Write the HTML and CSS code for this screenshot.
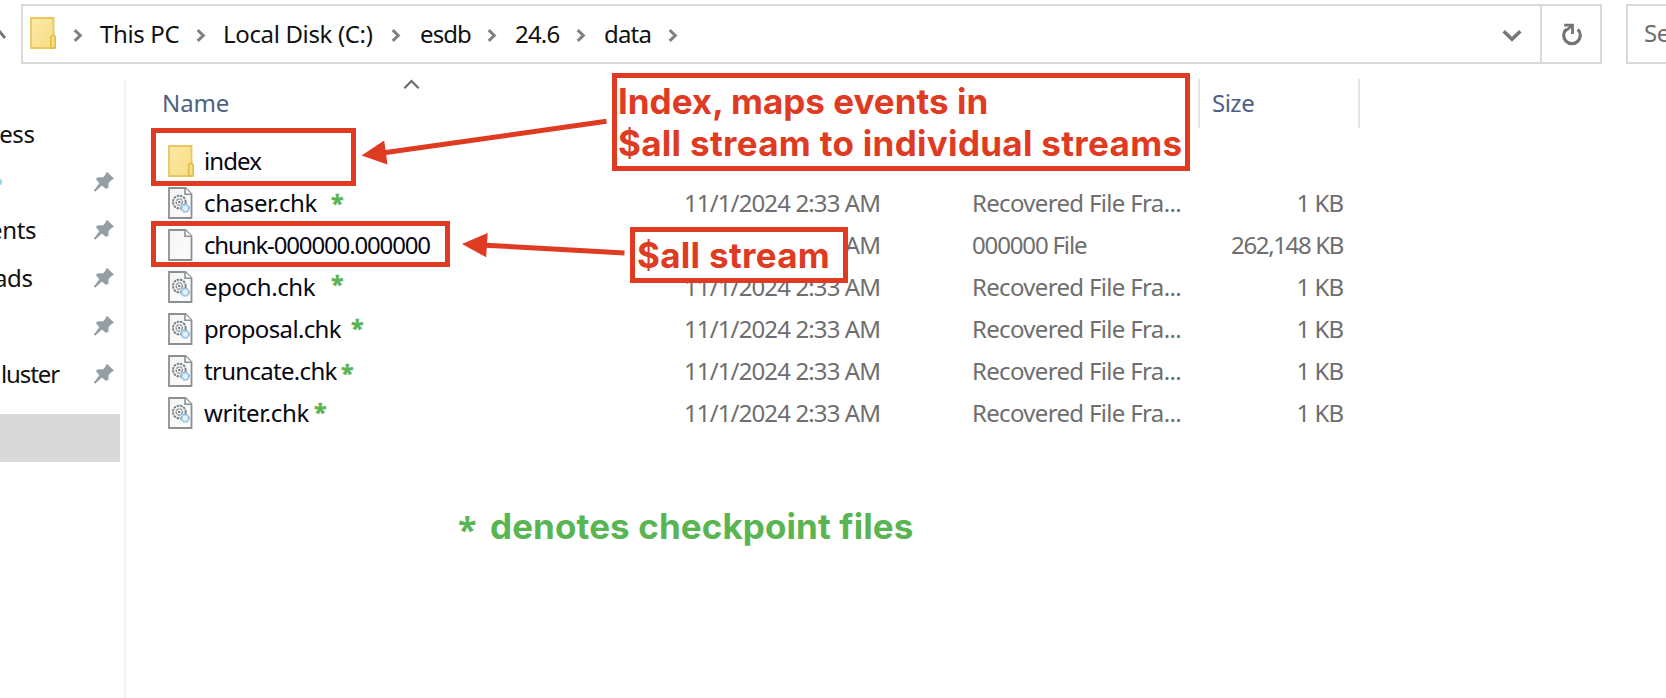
FILE: index.html
```
<!DOCTYPE html>
<html lang="en">
<head>
<meta charset="utf-8">
<title>data</title>
<link rel="stylesheet" href="styles.css">
</head>
<body>
<svg class="defs" width="0" height="0">
  <defs>
    <linearGradient id="gold" x1="0" y1="0" x2="1" y2="1"><stop offset="0" stop-color="#ffeaa6"/><stop offset="1" stop-color="#f5dc85"/></linearGradient>
    <linearGradient id="paper" x1="0" y1="0" x2="1" y2="1"><stop offset="0" stop-color="#f3f4f5"/><stop offset="1" stop-color="#fdfdfd"/></linearGradient>
    <symbol id="folder" viewBox="0 0 26 32">
      <path d="M1 1H23.5V31H1Z" fill="url(#gold)" stroke="#e8c761" stroke-width="1.8"/>
      <path d="M20.8 31V20.5Q20.8 18.6 23 18.6Q25.2 18.6 25.2 20.5V31Z" fill="#f8df8a" stroke="#dfb944" stroke-width="1.5"/>
    </symbol>
    <symbol id="blank" viewBox="0 0 25 32">
      <path d="M1 1H17.5L23.5 7V31H1Z" fill="url(#paper)" stroke="#8d9092" stroke-width="1.8"/>
      <path d="M17 1V7.3H23.5" fill="#fff" stroke="#8d9092" stroke-width="1.6"/>
    </symbol>
    <symbol id="gears" viewBox="0 0 25 32">
      <use href="#blank"/>
      <circle cx="11.3" cy="15" r="6.4" fill="#eef0f1" stroke="#777d82" stroke-width="1.8" stroke-dasharray="2.5 .85"/>
      <circle cx="11.3" cy="15" r="3.1" fill="#fff" stroke="#888e93" stroke-width="1.4" stroke-dasharray="3 .6"/>
      <circle cx="11.3" cy="15" r="1.2" fill="#777"/>
      <circle cx="17.2" cy="21.2" r="3.7" fill="#e4f1fb" stroke="#93bfe2" stroke-width="1.9" stroke-dasharray="2.4 .5"/>
    </symbol>
    <symbol id="pin" viewBox="0 0 22 22">
      <path d="M13.8 .8L21 7.4L18.3 9.2L15.6 12L15.3 17L12.8 17.8L8.9 14.4L2 20.8L.8 19.6L6.3 12.2L3 8.2L4.2 6.4L10.2 6.2L12.4 3.8Z" fill="#969ea5"/>
    </symbol>
    <symbol id="chev" viewBox="0 0 10 13"><path d="M1.7 1.2L7.3 6.5L1.7 11.8" fill="none" stroke="#808080" stroke-width="3"/></symbol>
  </defs>
</svg>

<main class="window">
  <header class="toolbar">
    <svg class="up" width="6" height="12" viewBox="0 0 6 12"><path d="M-3 8L0 3L5 9" fill="none" stroke="#777" stroke-width="2.8"/></svg>
    <div class="address">
      <svg class="root" width="26" height="32"><use href="#folder"/></svg>
      <svg class="c0" width="10" height="13"><use href="#chev"/></svg>
      <span class="crumb pc">This PC</span><svg width="10" height="13"><use href="#chev"/></svg>
      <span class="crumb disk">Local Disk (C:)</span><svg width="10" height="13"><use href="#chev"/></svg>
      <span class="crumb esdb">esdb</span><svg width="10" height="13"><use href="#chev"/></svg>
      <span class="crumb ver">24.6</span><svg width="10" height="13"><use href="#chev"/></svg>
      <span class="crumb last">data</span><svg width="10" height="13"><use href="#chev"/></svg>
      <svg class="drop" width="20" height="14" viewBox="0 0 20 14"><path d="M1.7 2.3L10 10.2L18.3 2.3" fill="none" stroke="#777" stroke-width="3.6"/></svg>
      <div class="refresh"><svg width="22" height="24" viewBox="0 0 22 24"><path d="M5.4 6.2A8.3 8.3 0 1 0 16.8 6.4" fill="none" stroke="#747474" stroke-width="3.2"/><path d="M3.2 2.2H11.5V11" fill="none" stroke="#747474" stroke-width="2.8"/><path d="M5.5 7.2L11 2.4" stroke="#747474" stroke-width="2.6"/></svg></div>
    </div>
    <div class="search">Search</div>
  </header>

  <div class="content">
    <nav class="sidebar">
      <div class="nav"><span class="access">cess</span></div>
      <div class="nav"><i class="dot"></i><svg width="22" height="22"><use href="#pin"/></svg></div>
      <div class="nav"><span class="documents">ents</span><svg width="22" height="22"><use href="#pin"/></svg></div>
      <div class="nav"><span class="downloads">ads</span><svg width="22" height="22"><use href="#pin"/></svg></div>
      <div class="nav"><svg width="22" height="22"><use href="#pin"/></svg></div>
      <div class="nav"><span class="cluster">luster</span><svg width="22" height="22"><use href="#pin"/></svg></div>
      <div class="selected"></div>
    </nav>

    <section class="files">
      <div class="head">
        <span class="h-name">Name</span>
        <svg class="sort" width="17" height="11" viewBox="0 0 17 11"><path d="M1.3 9.2L8.5 2L15.7 9.2" fill="none" stroke="#6b6b6b" stroke-width="2.2"/></svg>
        <span class="h-size">Size</span>
      </div>
      <div class="row"><svg width="26" height="32"><use href="#folder"/></svg><span class="name n-index">index</span><span class="date">11/1/2024 2:33 AM</span></div>
      <div class="row"><svg width="25" height="32"><use href="#gears"/></svg><span class="name n-chaser">chaser.chk</span><b class="star s-chaser">*</b><span class="date">11/1/2024 2:33 AM</span><span class="type">Recovered File Fra...</span><span class="size">1 KB</span></div>
      <div class="row"><svg width="25" height="32"><use href="#blank"/></svg><span class="name n-chunk">chunk-000000.000000</span><span class="date">11/1/2024 2:33 AM</span><span class="type zeros">000000 File</span><span class="size big">262,148 KB</span></div>
      <div class="row"><svg width="25" height="32"><use href="#gears"/></svg><span class="name n-epoch">epoch.chk</span><b class="star s-epoch">*</b><span class="date">11/1/2024 2:33 AM</span><span class="type">Recovered File Fra...</span><span class="size">1 KB</span></div>
      <div class="row"><svg width="25" height="32"><use href="#gears"/></svg><span class="name n-proposal">proposal.chk</span><b class="star s-proposal">*</b><span class="date">11/1/2024 2:33 AM</span><span class="type">Recovered File Fra...</span><span class="size">1 KB</span></div>
      <div class="row"><svg width="25" height="32"><use href="#gears"/></svg><span class="name n-truncate">truncate.chk</span><b class="star s-truncate">*</b><span class="date">11/1/2024 2:33 AM</span><span class="type">Recovered File Fra...</span><span class="size">1 KB</span></div>
      <div class="row"><svg width="25" height="32"><use href="#gears"/></svg><span class="name n-writer">writer.chk</span><b class="star s-writer">*</b><span class="date">11/1/2024 2:33 AM</span><span class="type">Recovered File Fra...</span><span class="size">1 KB</span></div>
      <div class="legend"><b>*</b><span>denotes checkpoint files</span></div>
    </section>
  </div>

  <div class="frame frame-index"></div>
  <div class="frame frame-chunk"></div>
  <div class="frame note-index"><div>Index, maps events in</div><div class="second">$all stream to individual streams</div></div>
  <div class="frame note-all">$all stream</div>
  <svg class="arrows" width="1666" height="698" viewBox="0 0 1666 698">
    <g fill="#df3a22" stroke="#df3a22">
      <path d="M384 152.8L606.5 121.3" stroke-width="5"/>
      <path d="M361.5 155.5L384.2 140.5L387.5 164.5Z" stroke="none"/>
      <path d="M485 245.2L624.5 253" stroke-width="5"/>
      <path d="M462 244L487.7 233L486.2 257.3Z" stroke="none"/>
    </g>
  </svg>
</main>
</body>
</html>
```
FILE: styles.css
```
* { box-sizing: border-box; }
body { margin: 0; background: #fff; font-family: "Noto Sans", "Open Sans", sans-serif; font-size: 24px; color: #111; }
svg { display: block; flex: none; }
.defs { position: absolute; }
.window { position: relative; width: 1666px; height: 698px; overflow: hidden; }

.toolbar { display: flex; height: 64px; padding-top: 4px; }
.up { margin: 25px 15px 0 0; }
.address { width: 1581px; height: 60px; border: 2px solid #d9d9d9; display: flex; align-items: center; white-space: nowrap; flex: none; }
.address > svg { margin-top: 3px; }
.address > .root { margin: -3px 17px 0 7px; }
.crumb { margin: -1px 19px 0 18px; line-height: 34px; flex: none; }
.crumb.pc { width: 78px; margin-left: 17px; margin-right: 18px; letter-spacing: -.35px; }
.crumb.disk { width: 150px; letter-spacing: -.35px; margin-right: 18px; margin-left: 17px; }
.crumb.esdb { width: 49px; letter-spacing: -.9px; margin-left: 19px; margin-right: 18px; }
.crumb.ver { width: 43px; letter-spacing: -.8px; margin-left: 18px; margin-right: 18px; }
.crumb.last { width: 45px; letter-spacing: -.8px; }
.address > .drop { margin: 4px 18px 0 auto; }
.refresh { width: 60px; height: 56px; border-left: 2px solid #d9d9d9; display: flex; align-items: center; justify-content: center; padding: 2px 0 0 1px; }
.search { width: 80px; height: 60px; margin-left: 24px; border: 2px solid #d9d9d9; padding-left: 16px; line-height: 54px; color: #6d6d6d; flex: none; letter-spacing: -.4px; }

.content { display: flex; height: 634px; padding-top: 15px; }
.sidebar { width: 126px; border-right: 2px solid #f2f2f2; padding-top: 31px; flex: none; }
.nav { height: 48px; display: flex; align-items: center; }
.nav span { width: 80px; flex: none; line-height: 34px; letter-spacing: -.35px; }
.access { margin-left: -12px; }
.documents { margin-left: -11px; }
.downloads { margin-left: -6px; }
.nav .cluster { margin-left: 1px; letter-spacing: -1.1px; }
.nav svg { margin: -1px 9px 0 auto; }
.dot { width: 2px; height: 6px; border-radius: 0 3px 3px 0; background: #9bd3f3; }
.selected { width: 120px; height: 48px; margin-top: 16px; background: #d9d9d9; }

.files { width: 1234px; }
.head { display: flex; height: 49px; color: #4e5f86; line-height: 48px; }
.h-name { width: 241px; margin-left: 36px; letter-spacing: -.1px; }
.h-size { width: 162px; margin-left: auto; border-left: 2px solid #e5e5e5; border-right: 2px solid #e5e5e5; padding-left: 12px; letter-spacing: -.5px; }
.row { height: 42px; display: grid; grid-template: 42px / 36px 480px 287px 372px; padding-left: 42px; align-items: center; line-height: 40px; white-space: nowrap; color: #6e6e6e; }
.row:nth-child(2) { margin-top: 12px; }
.row > * { grid-row: 1; }
.name { grid-column: 2; color: #080812; }
.date { grid-column: 3; letter-spacing: -.88px; }
.type { grid-column: 4; letter-spacing: -.67px; padding-left: 1px; }
.size { grid-column: 4; justify-self: end; letter-spacing: -1px; }
.type.zeros { letter-spacing: -1.15px; }
.size.big { letter-spacing: -1.35px; }
.n-index { letter-spacing: -.9px; }
.n-chaser { letter-spacing: -.35px; }
.n-chunk { letter-spacing: -1.15px; }
.n-epoch { letter-spacing: -.4px; }
.n-proposal { letter-spacing: -.65px; }
.n-truncate { letter-spacing: -.7px; }
.n-writer { letter-spacing: -.4px; }
.star { grid-column: 2; align-self: start; color: #59b552; font: bold 23px/40px "Open Sans", sans-serif; -webkit-text-stroke: .5px #59b552; }
.s-chaser { margin: 1px 0 0 127px; }
.s-epoch { margin: -2px 0 0 127px; }
.s-proposal { margin: 0 0 0 147px; }
.s-truncate { margin: 3px 0 0 137px; }
.s-writer { margin: 0 0 0 110px; }

.legend { display: flex; margin: 68px 0 0 332px; color: #59b552; font: bold 35px/48px Inter, sans-serif; letter-spacing: .1px; }
.legend b { width: 32px; font: bold 34px/54px "Open Sans", sans-serif; letter-spacing: 0; }
.legend span { white-space: nowrap; }

.frame { position: absolute; border: 5px solid #df3a22; }
.frame-index { left: 151px; top: 128px; width: 205px; height: 58px; }
.frame-chunk { left: 151px; top: 221px; width: 299px; height: 46px; }
.note-index, .note-all { background: #fff; color: #df3a22; font: bold 35px/42px Inter, sans-serif; white-space: nowrap; }
.note-index { left: 612px; top: 73px; width: 578px; height: 98px; padding: 2px 0 0 1px; }
.note-index .second { letter-spacing: .3px; }
.note-all { left: 630px; top: 227px; width: 218px; height: 56px; padding: 2px 0 0 2px; letter-spacing: .3px; }
.arrows { position: absolute; left: 0; top: 0; }
```
